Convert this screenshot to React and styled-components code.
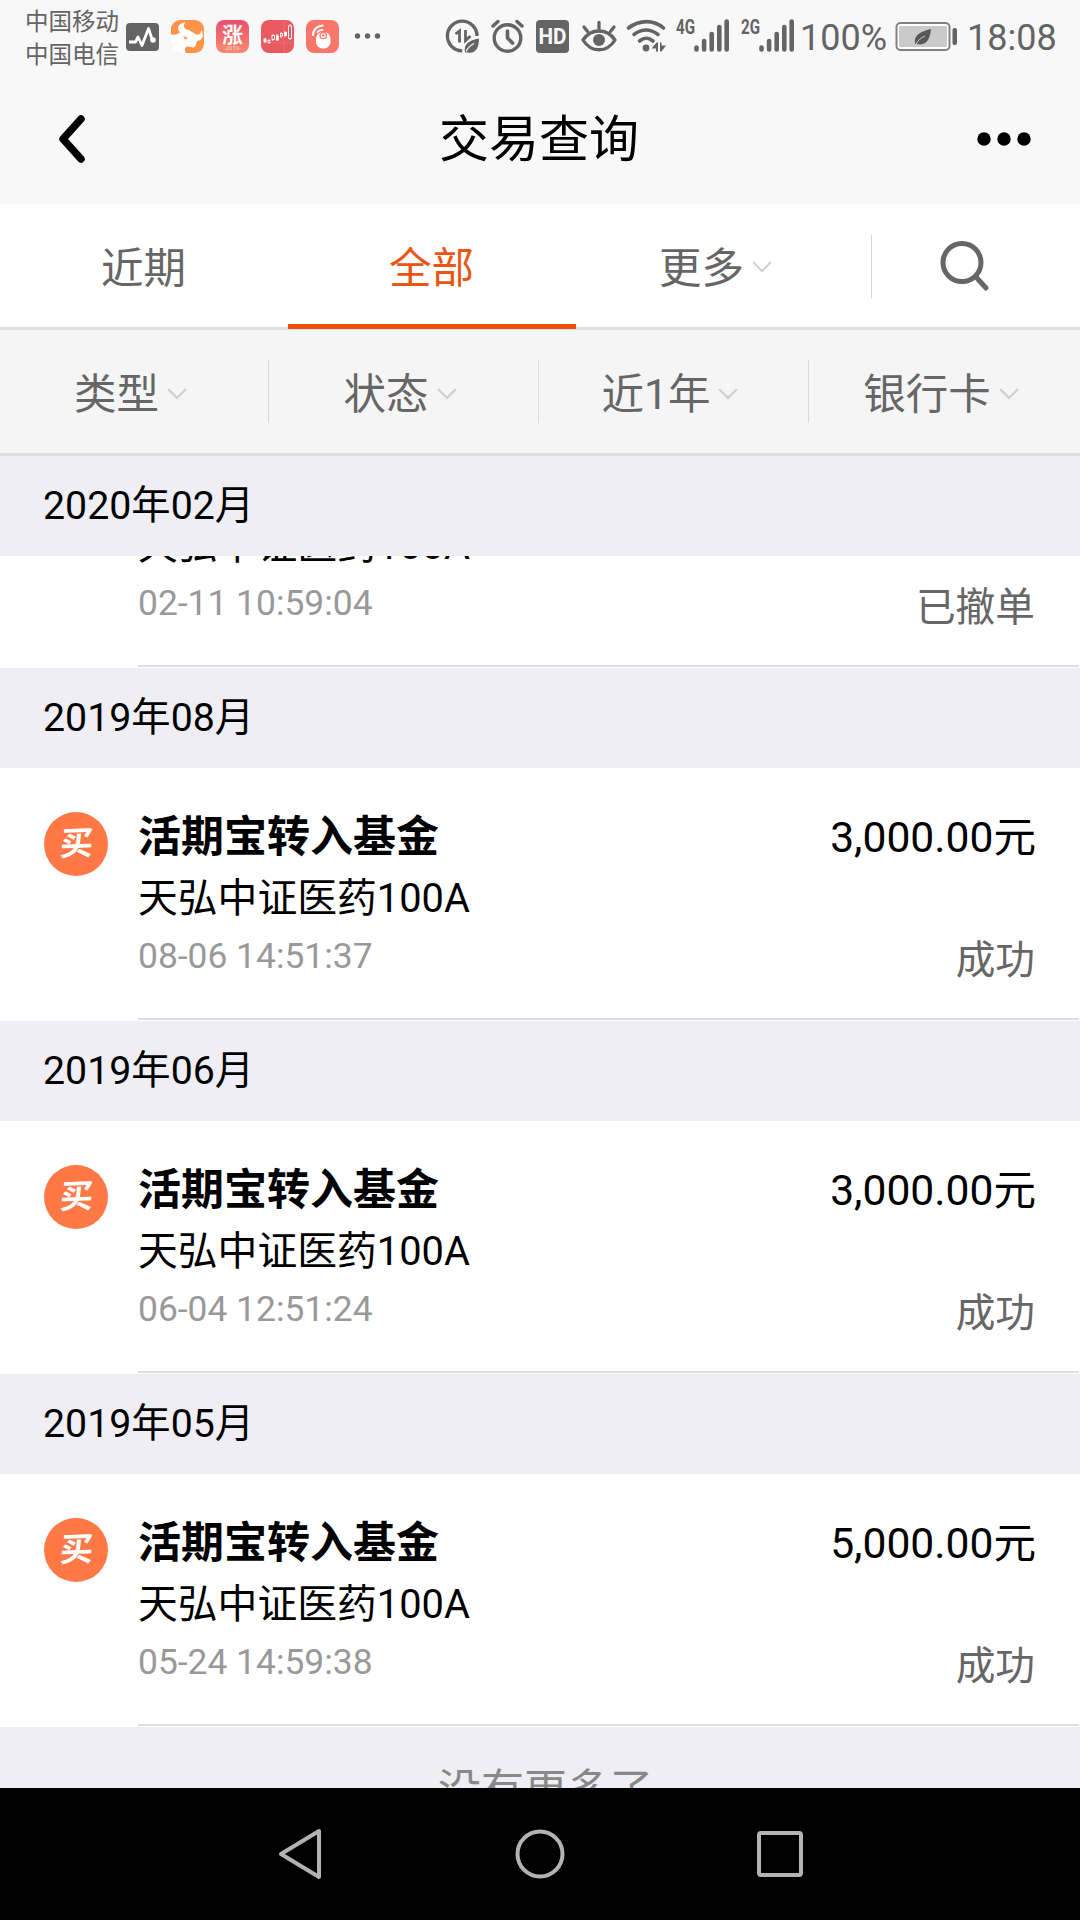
import React from "react";
import styled, { createGlobalStyle } from "styled-components";

const GlobalStyle = createGlobalStyle`
  * { box-sizing: border-box; }
  body {
    margin: 0;
    background: #000;
    font-family: Roboto, "Noto Sans CJK SC", sans-serif;
    -webkit-font-smoothing: antialiased;
  }
`;

const Screen = styled.div`
  width: 1080px;
  height: 1920px;
  display: flex;
  flex-direction: column;
  background: #efeef4;
  overflow: hidden;
`;

const StatusBar = styled.header`
  flex: none;
  height: 76px;
  padding: 0 24px 0 25px;
  display: flex;
  align-items: flex-start;
  justify-content: space-between;
  background: #f8f8f8;
  color: #646464;
`;

const StatusGroup = styled.div`
  display: flex;
  align-items: flex-start;
`;

const Carriers = styled.div`
  width: 98px;
  padding-top: 6px;
  font-size: 23.5px;
  line-height: 33px;
  white-space: nowrap;
`;

const StatusText = styled.span`
  width: ${(p) => p.$width}px;
  padding-top: 16px;
  font-size: 36px;
  line-height: 44px;
  white-space: nowrap;
`;

const NavBar = styled.div`
  flex: none;
  height: 128px;
  padding: 0 44px 2px 56px;
  display: grid;
  grid-template-columns: 60px 1fr 60px;
  align-items: center;
  background: #f8f8f8;
`;

const NavTitle = styled.h1`
  margin: 0;
  padding: 2px 14px 0 0;
  text-align: center;
  font-size: 50px;
  line-height: 72px;
  font-weight: 400;
  color: #000;
`;

const Tabs = styled.nav`
  flex: none;
  height: 126px;
  display: flex;
  background: #fff;
  border-bottom: 3px solid #dfdfdf;
`;

const Tab = styled.div`
  width: 288px;
  height: ${(p) => (p.$active ? 125 : 123)}px;
  padding-bottom: ${(p) => (p.$active ? 0 : 3)}px;
  padding-right: ${(p) => (p.$menu ? 9 : 1)}px;
  display: flex;
  align-items: center;
  justify-content: center;
  gap: 8px;
  font-size: 42.5px;
  color: ${(p) => (p.$active ? "#ea5514" : "#666")};
  border-bottom: ${(p) => (p.$active ? "5px solid #ec4e10" : "none")};
`;

const SearchCell = styled.div`
  flex: 1;
  height: 63px;
  margin-top: 31px;
  padding: 0 22px 2px 0;
  display: flex;
  align-items: center;
  justify-content: center;
  border-left: 1px solid #d6d6d6;
  margin-left: 7px;
`;

const Filters = styled.div`
  flex: none;
  height: 126px;
  display: grid;
  grid-template-columns: 269px 270px 270px 271px;
  align-items: center;
  background: #f5f5f5;
  border-bottom: 3px solid #dedee0;
`;

const Filter = styled.div`
  height: 63px;
  padding: 0 7px 2px 0;
  display: flex;
  align-items: center;
  justify-content: center;
  gap: 8px;
  font-size: 42.5px;
  color: #666;
  border-right: ${(p) => (p.$last ? "none" : "1px solid #d9d9d9")};
`;

const ChevronIcon = styled.svg`
  flex: none;
  margin-top: 6px;
`;

const List = styled.main`
  flex: 1;
  min-height: 0;
  overflow: hidden;
`;

const Month = styled.div`
  height: 100px;
  padding: 0 0 9px 43px;
  display: flex;
  align-items: center;
  background: #efeef4;
  font-size: 39.3px;
  color: #000;
`;

const Entry = styled.article`
  height: 253px;
  padding-left: 44px;
  display: flex;
  background: #fff;
`;

const Badge = styled.div`
  flex: none;
  width: 64px;
  height: 64px;
  margin: 44px 30px 0 0;
  border-radius: 50%;
  background: #ff7846;
  color: #fff;
  display: flex;
  align-items: center;
  justify-content: center;
`;

const BadgeGlyph = styled.span`
  font-size: 33px;
  line-height: 36px;
  font-weight: 700;
  transform: skewX(-5deg) rotate(-2deg);
`;

const EntryBody = styled.div`
  width: 941px;
  height: 252px;
  padding-right: 43px;
  display: flex;
  justify-content: space-between;
  border-bottom: 2px solid #dedede;
`;

const EntryColumn = styled.div`
  display: flex;
  flex-direction: column;
  align-items: ${(p) => (p.$right ? "flex-end" : "flex-start")};
  white-space: nowrap;
`;

const Title = styled.div`
  margin-top: 38px;
  font-size: 43px;
  line-height: 62px;
  font-weight: 700;
  color: #000;
`;

const Fund = styled.div`
  padding-top: 1px;
  font-size: 39.8px;
  line-height: 60px;
  color: #000;
`;

const Time = styled.div`
  font-size: 35.4px;
  line-height: 54px;
  color: #999;
`;

const Amount = styled.div`
  margin-top: 38px;
  font-size: 42.6px;
  line-height: 62px;
  color: #000;
`;

const Status = styled.div`
  margin-top: 63px;
  padding-right: 1px;
  font-size: 39.7px;
  line-height: 60px;
  color: #666;
`;

const PartialEntry = styled.div`
  height: 112px;
  padding-left: 138px;
  background: #fff;
`;

const PartialBody = styled.div`
  width: 941px;
  height: 111px;
  padding-right: 43px;
  display: flex;
  align-items: flex-end;
  justify-content: space-between;
  overflow: hidden;
  border-bottom: 2px solid #dedede;
`;

const PartialColumn = styled.div`
  padding-bottom: ${(p) => p.$bottom}px;
`;

const EndNote = styled.div`
  padding: 32px 0 0 11px;
  text-align: center;
  font-size: 43px;
  line-height: 62px;
  color: #888;
`;

const SystemBar = styled.footer`
  flex: none;
  height: 132px;
  display: grid;
  grid-template-columns: repeat(3, 240px);
  justify-content: center;
  justify-items: center;
  align-items: center;
  background: #000;
`;

const Chevron = () => (
  <ChevronIcon width="20" height="12" viewBox="0 0 20 12" fill="none" stroke="#cfcfcf" strokeWidth="2">
    <path d="M1 1l9 9 9-9" />
  </ChevronIcon>
);

const AppIcons = () => (
  <svg width="262" height="76" viewBox="123 0 262 76">
    <defs>
      <linearGradient id="rise" x1="0" y1="0" x2="0" y2="1">
        <stop offset="0" stopColor="#e8506c" />
        <stop offset="1" stopColor="#fb8a70" />
      </linearGradient>
    </defs>
    <rect x="126" y="23" width="33" height="28" rx="4" fill="#646464" />
    <path d="M129 42h6.5l2.5-5 4 8.5 6.500-17 4 12" fill="none" stroke="#fff" strokeWidth="2.8" strokeLinejoin="round" />
    <circle cx="153" cy="40" r="2.8" fill="#fff" />
    <rect x="171" y="20" width="33" height="33" rx="9" fill="#ff9448" />
    <path d="M171 34.500C174 35 177 34.500 180 32.500C176 29 178 23.500 185.500 22C182.500 26 184 30 189 30L196 34.500C200 35 201.500 33 201 29.500C204.500 35 203 40.500 197 41L195.500 45.500C195 47.500 193 48 191 47L187 46.500C184.500 48 184.500 50.500 186 53H180Q171 53 171 44Z" fill="#fff" />
    <path d="M183 36l5 2-3 1.5z" fill="#ff9448" />
    <rect x="216" y="20" width="33" height="33" rx="8" fill="url(#rise)" />
    <text x="232.5" y="42" textAnchor="middle" fontSize="21" fontWeight="700" fill="#fff">涨</text>
    <text x="232.5" y="50" textAnchor="middle" fontSize="6" fill="#ffd9cf">-2019-</text>
    <rect x="261" y="20" width="33" height="33" rx="8" fill="#e85a60" />
    <path d="M284 20v33M261 43h33" stroke="#ef7a7c" strokeWidth="0.6" />
    <g fill="#e85a60" stroke="#fff" strokeWidth="0.9">
      <path d="M265 38v5M269 39v5M273 34v7M277 34v7M281 32v6M285 31v6M290 24v16" />
      <rect x="264" y="39" width="2" height="2.5" fill="#fff" />
      <rect x="268" y="40.5" width="2" height="2" />
      <rect x="272" y="35.5" width="2.5" height="4" />
      <rect x="276.5" y="36" width="2" height="4" fill="#fff" />
      <rect x="280.5" y="33.5" width="2" height="2.5" />
      <rect x="284.5" y="32.5" width="2" height="3" fill="#fff" />
      <rect x="288.5" y="26" width="3" height="12.5" />
    </g>
    <rect x="306" y="20" width="33" height="33" rx="8" fill="#f9766a" />
    <rect x="316" y="32" width="14.5" height="16.5" rx="6.5" fill="#fff" />
    <circle cx="323.3" cy="35.5" r="3.2" fill="#fff" stroke="#f9766a" strokeWidth="1.3" />
    <circle cx="323.3" cy="35.5" r="1.3" fill="#f9766a" />
    <path d="M313 35c0-5 4-9 9.500-9.500" fill="none" stroke="#fff" strokeWidth="2.2" strokeLinecap="round" />
    <path d="M317.500 32c1-1.500 2.500-2 5-2.200" fill="none" stroke="#fff" strokeWidth="1.8" strokeLinecap="round" />
    <g fill="#646464">
      <circle cx="357.5" cy="36" r="2.7" />
      <circle cx="367.5" cy="36" r="2.7" />
      <circle cx="377.5" cy="36" r="2.7" />
    </g>
  </svg>
);

const SignalBars = ({ x }) => (
  <g stroke="#646464" strokeWidth="4.6" strokeLinecap="round">
    <path d={`M${x} 47.500v2M${x + 7.6} 41v8.500M${x + 15.2} 34v15.500M${x + 22.8} 27v22.500M${x + 30.2} 21.500v28`} />
  </g>
);

const SystemIcons = () => (
  <svg width="356" height="76" viewBox="444 0 356 76" fill="none" stroke="#646464">
    <path d="M477 36a14.800 14.800 0 1 0-14.800 14.800" strokeWidth="3.3" />
    <path d="M455.500 34l4-3V42.500M465.500 30v10.500l5-4.500" strokeWidth="2.8" />
    <path d="M465 52.500c-1.500-9 4-12 14-14 0 10-4 15.500-11 14z" fill="#646464" stroke="none" />
    <path d="M466 51.500c2-4 4-6 8-8" stroke="#f8f8f8" strokeWidth="1.2" />
    <circle cx="507.5" cy="38" r="13.3" strokeWidth="3.4" />
    <path d="M507.500 31v7l5 5" strokeWidth="3.6" strokeLinecap="round" strokeLinejoin="round" />
    <path d="M493 26l5-4.500M522 26l-5-4.500" strokeWidth="3.4" strokeLinecap="round" />
    <rect x="536" y="20" width="33" height="33" rx="4" fill="#646464" stroke="none" />
    <text x="552.5" y="44" textAnchor="middle" fontSize="21.5" fontWeight="700" textLength="28" lengthAdjust="spacingAndGlyphs" fill="#f8f8f8" stroke="none">HD</text>
    <path d="M583 40c8-12 24-12 32 0-8 13-24 13-32 0z" strokeWidth="3.3" strokeLinejoin="round" />
    <circle cx="599" cy="40" r="6" fill="#646464" stroke="none" />
    <path d="M599 22.500v6M584 27l3.500 4.500M614 27l-3.500 4.500" strokeWidth="3.3" strokeLinecap="round" />
    <path d="M628.500 28c11-8.500 25-8.500 35 0M634 34.500c8-6 16-6 24 0M639.500 41c5-4 8.500-4 13.500 0" strokeWidth="3.6" strokeLinecap="round" />
    <circle cx="646" cy="48" r="3.4" fill="#646464" stroke="none" />
    <path d="M651.500 48.500l5-6h1.500v9h-2v-3zM660 51.500v-9h1.500l0 3h4.500l-4.500 6z" fill="#646464" stroke="none" />
    <g fill="#646464" stroke="none" fontSize="20" fontWeight="700">
      <text x="676" y="34" textLength="19" lengthAdjust="spacingAndGlyphs">4G</text>
      <text x="741" y="34" textLength="19" lengthAdjust="spacingAndGlyphs">2G</text>
    </g>
    <SignalBars x={696.5} />
    <SignalBars x={761.5} />
  </svg>
);

const Battery = () => (
  <svg width="81" height="76" viewBox="886 0 81 76">
    <rect x="896.5" y="23" width="53" height="27" rx="4" fill="#fff" stroke="#828282" strokeWidth="2" />
    <rect x="899" y="26" width="48" height="21" rx="1" fill="#cacaca" />
    <rect x="952.5" y="28" width="4.5" height="17" rx="2" fill="#646464" />
    <path d="M915 44c-1-10 5-12 16-15-1 11-5 17-14 15z" fill="#585858" />
    <path d="M916 44c2-4 5-6 9-8" fill="none" stroke="#cacaca" strokeWidth="1" />
  </svg>
);

const BackIcon = () => (
  <svg width="34" height="52" viewBox="0 0 34 52" fill="none" stroke="#000" strokeWidth="7.5" strokeLinecap="round" strokeLinejoin="round">
    <path d="M25 6L7 26l18 20" />
  </svg>
);

const MoreIcon = () => (
  <svg width="60" height="16" viewBox="0 0 60 16" fill="#000">
    <circle cx="8" cy="8" r="6.7" />
    <circle cx="28" cy="8" r="6.7" />
    <circle cx="48" cy="8" r="6.7" />
  </svg>
);

const SearchIcon = () => (
  <svg width="50" height="52" viewBox="0 0 50 52" fill="none" stroke="#666" strokeWidth="5" strokeLinecap="round">
    <circle cx="22" cy="22.5" r="19" />
    <path d="M36 37l10 11" />
  </svg>
);

const records = [
  { month: "2019年08月", time: "08-06 14:51:37", amount: "3,000.00元" },
  { month: "2019年06月", time: "06-04 12:51:24", amount: "3,000.00元" },
  { month: "2019年05月", time: "05-24 14:59:38", amount: "5,000.00元" },
];

const Record = ({ time, amount }) => (
  <Entry>
    <Badge><BadgeGlyph>买</BadgeGlyph></Badge>
    <EntryBody>
      <EntryColumn>
        <Title>活期宝转入基金</Title>
        <Fund>天弘中证医药100A</Fund>
        <Time>{time}</Time>
      </EntryColumn>
      <EntryColumn $right>
        <Amount>{amount}</Amount>
        <Status>成功</Status>
      </EntryColumn>
    </EntryBody>
  </Entry>
);

export default function App() {
  return (
    <>
      <GlobalStyle />
      <Screen>
        <StatusBar>
          <StatusGroup>
            <Carriers>
              <div>中国移动</div>
              <div>中国电信</div>
            </Carriers>
            <AppIcons />
          </StatusGroup>
          <StatusGroup>
            <SystemIcons />
            <StatusText $width={86}>100%</StatusText>
            <Battery />
            <StatusText $width={89}>18:08</StatusText>
          </StatusGroup>
        </StatusBar>
        <NavBar>
          <BackIcon />
          <NavTitle>交易查询</NavTitle>
          <MoreIcon />
        </NavBar>
        <Tabs>
          <Tab>近期</Tab>
          <Tab $active>全部</Tab>
          <Tab $menu>更多<Chevron /></Tab>
          <SearchCell><SearchIcon /></SearchCell>
        </Tabs>
        <Filters>
          <Filter>类型<Chevron /></Filter>
          <Filter>状态<Chevron /></Filter>
          <Filter>近1年<Chevron /></Filter>
          <Filter $last>银行卡<Chevron /></Filter>
        </Filters>
        <List>
          <Month>2020年02月</Month>
          <PartialEntry>
            <PartialBody>
              <PartialColumn $bottom={35}>
                <Fund>天弘中证医药100A</Fund>
                <Time>02-11 10:59:04</Time>
              </PartialColumn>
              <PartialColumn $bottom={27}>
                <Status>已撤单</Status>
              </PartialColumn>
            </PartialBody>
          </PartialEntry>
          {records.map((r) => (
            <React.Fragment key={r.month}>
              <Month>{r.month}</Month>
              <Record time={r.time} amount={r.amount} />
            </React.Fragment>
          ))}
          <EndNote>没有更多了</EndNote>
        </List>
        <SystemBar>
          <svg width="48" height="54" viewBox="0 0 48 54" fill="none" stroke="#b3b3b3" strokeWidth="4" strokeLinejoin="round">
            <path d="M43 4v46L5 27z" />
          </svg>
          <svg width="50" height="50" viewBox="0 0 50 50" fill="none" stroke="#b3b3b3" strokeWidth="4">
            <circle cx="25" cy="25" r="22.5" />
          </svg>
          <svg width="46" height="46" viewBox="0 0 46 46" fill="none" stroke="#b3b3b3" strokeWidth="4">
            <rect x="2" y="2" width="42" height="42" rx="2" />
          </svg>
        </SystemBar>
      </Screen>
    </>
  );
}
